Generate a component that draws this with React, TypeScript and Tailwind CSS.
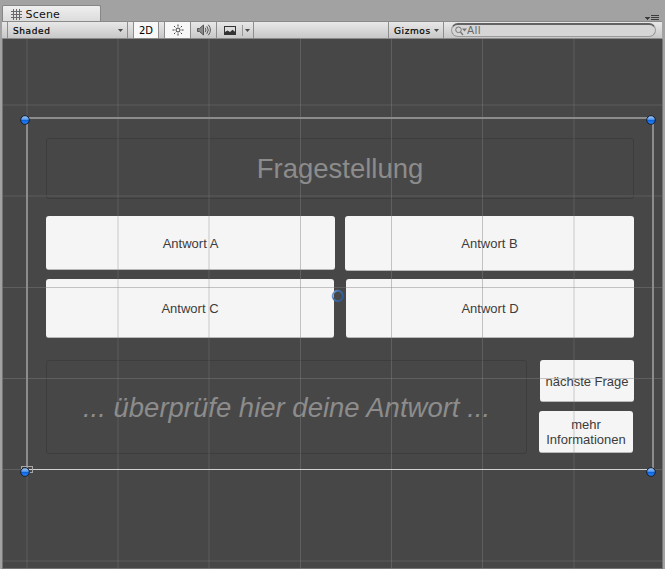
import React from "react";

const VERTICAL = [
  { at: 26, size: 2 },
  { at: 117, size: 2 },
  { at: 208, size: 2 },
  { at: 300, size: 1 },
  { at: 391, size: 1 },
  { at: 482, size: 1 },
  { at: 573, size: 2 },
];

const HORIZONTAL = [
  { at: 65, size: 2 },
  { at: 156, size: 2 },
  { at: 248, size: 1 },
  { at: 339, size: 1 },
  { at: 430, size: 1 },
  { at: 521, size: 2 },
];

function GridLines() {
  return (
    <svg className="pointer-events-none absolute left-0 top-0" width="665" height="530" shapeRendering="crispEdges">
      {VERTICAL.map((l) => (
        <rect key={l.at} x={l.at} y={0} width={l.size} height={530} fill="#808080" fillOpacity={l.size === 2 ? 0.19 : 0.43} />
      ))}
      {HORIZONTAL.map((l) => (
        <rect key={l.at} x={3} y={l.at} width={659} height={l.size} fill="#808080" fillOpacity={l.size === 2 ? 0.19 : 0.43} />
      ))}
    </svg>
  );
}

function CanvasOutline() {
  return (
    <svg className="pointer-events-none absolute left-0 top-0" width="665" height="530">
      <defs>
        <linearGradient id="knob" x1="0" y1="0" x2="0" y2="1">
          <stop offset="0" stopColor="#a9cdf8" />
          <stop offset="0.42" stopColor="#5a9df0" />
          <stop offset="0.55" stopColor="#0c63e0" />
          <stop offset="1" stopColor="#2f8cff" />
        </linearGradient>
        <linearGradient id="pivot" x1="0" y1="0" x2="1" y2="0.5">
          <stop offset="0" stopColor="#8fb4e2" />
          <stop offset="0.4" stopColor="#4470ad" />
          <stop offset="1" stopColor="#2f5b9c" />
        </linearGradient>
      </defs>
      <g fill="#8c8c8c" shapeRendering="crispEdges">
        <rect x="26" y="78" width="628" height="2" />
        <rect x="26" y="78" width="2" height="353" />
        <rect x="652" y="78" width="2" height="353" />
        <rect x="26" y="430" width="628" height="1" fill="#d2d2d2" />
      </g>
      <rect x="21.5" y="427.5" width="11" height="6" fill="none" stroke="#a8a8a8" />
      {[25, 651].map((x) =>
        [81, 433].map((y) => (
          <circle key={`${x}-${y}`} cx={x} cy={y} r="4.3" fill="url(#knob)" stroke="#161d2a" strokeWidth="1" />
        )),
      )}
      <circle cx="337.8" cy="257" r="5.2" fill="none" stroke="url(#pivot)" strokeWidth="1.9" />
    </svg>
  );
}

function SceneButton({ className, children }: { className: string; children: React.ReactNode }) {
  return (
    <button
      className={`flex items-center justify-center rounded-[3px] border-b border-[#b9b9b9] bg-[#f5f5f5] text-[13px] leading-[14.5px] text-[#3c3c3c] ${className}`}
    >
      {children}
    </button>
  );
}

function Arrow({ className = "" }: { className?: string }) {
  return (
    <svg className={className} width="5" height="3" viewBox="0 0 5 3">
      <path d="M0 0h5L2.5 3z" fill="#4a4a4a" />
    </svg>
  );
}

function TabBar() {
  return (
    <div className="flex h-[21px] items-end justify-between pl-[2px]">
      <div className="flex h-4 w-[99px] items-center rounded-t-[2px] border border-b-0 border-[#868686] bg-linear-to-b from-[#efefef] to-[#dcdcdc] pl-2">
        <svg width="11" height="11" viewBox="0 0 11 11" className="mt-px" shapeRendering="crispEdges">
          <path d="M2.5 0v11M5.5 0v11M8.5 0v11M0 2.5h11M0 5.5h11M0 8.5h11" stroke="#6a6a6a" strokeWidth="1" />
        </svg>
        <span className="ml-[3.5px] mt-px text-[11px] leading-none tracking-[0.2px] text-[#111]">Scene</span>
      </div>
      <svg width="14" height="6" viewBox="0 0 14 6" className="mr-[6px]" shapeRendering="crispEdges">
        <path d="M0 2h5v1H4v1H3v1H2V4H1V3H0zM6 0h8v1H6zM6 2h8v1H6zM6 4h8v1H6z" fill="#3c3c3c" />
      </svg>
    </div>
  );
}

function Toolbar() {
  return (
    <div className="mx-[2px] flex h-[18px] w-[660px] border-y border-[#8a8a8a] bg-linear-to-b from-[#e8e8e8] to-[#c8c8c8] text-[9px] text-black">
      <div className="w-[6px] border-r border-[#8e8e8e]" />
      <div className="flex w-[120px] items-center justify-between border-r border-[#8e8e8e] pl-[5px] pr-[4px]">
        <span className="pt-[2px] leading-none tracking-[0.6px] [-webkit-text-stroke:0.2px_black]">Shaded</span>
        <Arrow />
      </div>
      <div className="w-[6px] border-r border-[#8e8e8e]" />
      <div className="flex w-[25px] items-center justify-center border-r border-[#8e8e8e] bg-[#f8f8f8]">
        <span className="pt-px text-[10px] leading-none">2D</span>
      </div>
      <div className="w-[6px] border-r border-[#8e8e8e]" />
      <div className="flex w-[26px] items-center justify-center border-r border-[#8e8e8e] bg-[#f8f8f8]">
        <svg width="12" height="12" viewBox="0 0 12 12" fill="none" stroke="#3c3c3c">
          <circle cx="6" cy="6" r="2" />
          <path d="M6 .5v2M6 9.5v2M.5 6h2M9.5 6h2M2 2l1.3 1.3M8.7 8.7L10 10M2 10l1.3-1.3M8.7 3.3L10 2" />
        </svg>
      </div>
      <div className="flex w-[26px] items-center justify-center border-r border-[#8e8e8e]">
        <svg width="14" height="12" viewBox="0 0 14 12" fill="none" stroke="#555">
          <path d="M.5 4.5h2L6.5 1v10l-4-3.5h-2z" fill="#8a8a8a" />
          <path d="M8.2 3.8q1.6 2.2 0 4.4M9.8 2.2q3 3.8 0 7.6M11.4.8q4 5.2 0 10.4" />
        </svg>
      </div>
      <div className="flex w-[37px] items-center border-r border-[#8e8e8e] pl-[7px]">
        <svg width="12" height="9" viewBox="0 0 12 9">
          <path d="M0 0h12v9H0z" fill="#333" />
          <path d="M1 1h10v4.8L8.5 3.8 6 6 3.5 4.6 1 6z" fill="#ddd" />
        </svg>
        <div className="ml-[6px] h-[11px] w-px bg-[#999]" />
        <Arrow className="ml-[2px]" />
      </div>
      <div className="grow" />
      <div className="flex w-[56px] items-center justify-between border-x border-[#8e8e8e] pl-[5px] pr-[4px]">
        <span className="pt-[2px] leading-none tracking-[0.6px] [-webkit-text-stroke:0.2px_black]">Gizmos</span>
        <Arrow />
      </div>
      <div className="flex w-[218px] items-center pl-[7px] pr-[6px]">
        <div className="flex h-[14px] w-full items-center rounded-full border border-t-2 border-[#999] border-t-[#626262] bg-[#d6d6d6] pl-[3px]">
          <svg width="12" height="10" viewBox="0 0 12 10" fill="none" stroke="#777">
            <circle cx="3.5" cy="3.8" r="2.8" />
            <path d="M5.5 6L8 9" strokeWidth="1.3" />
            <path d="M7 2.5h5L9.5 5.5z" fill="#777" stroke="none" />
          </svg>
          <span className="-mt-px text-[10.5px] leading-none tracking-[0.3px] text-[#686868]">All</span>
        </div>
      </div>
    </div>
  );
}

export default function App() {
  return (
    <div className="h-[569px] w-[665px] overflow-hidden bg-[#a2a2a2] font-['DejaVu_Sans',sans-serif]">
      <TabBar />
      <Toolbar />
      <main className="relative ml-[2px] h-[530px] w-[661px] border-x border-b border-[#747474] bg-[#474747] font-['Liberation_Sans',Arial,sans-serif]">
        <div className="flex flex-col pl-[43px] pt-[99px]">
          <div className="flex h-[61px] w-[588px] items-center justify-center rounded-[3px] border border-[#3d3d3d] pt-px text-[27.5px] text-[#8c8c8c]">
            Fragestellung
          </div>
          <div className="mt-[17px] flex items-start gap-[10px]">
            <SceneButton className="h-[54px] w-[289px] pt-[3px]">Antwort A</SceneButton>
            <SceneButton className="h-[55px] w-[289px] pt-[2px]">Antwort B</SceneButton>
          </div>
          <div className="mt-[8px] flex gap-[12px]">
            <SceneButton className="h-[59px] w-[288px] pt-[2px]">Antwort C</SceneButton>
            <SceneButton className="h-[59px] w-[288px] pt-[2px]">Antwort D</SceneButton>
          </div>
          <div className="mt-[22px] flex">
            <div className="flex h-[94px] w-[481px] items-center justify-center whitespace-nowrap rounded-[3px] border border-[#3d3d3d] pt-[2px] text-[27.5px] italic text-[#8c8c8c]">
              ... überprüfe hier deine Antwort ...
            </div>
            <div className="ml-[12px] flex flex-col gap-[9px]">
              <SceneButton className="ml-px h-[42px] w-[94px] whitespace-nowrap pt-[3px]">nächste Frage</SceneButton>
              <SceneButton className="h-[42px] w-[94px] pt-[2px]">
                <span>
                  mehr
                  <br />
                  Informationen
                </span>
              </SceneButton>
            </div>
          </div>
        </div>
        <div className="absolute -left-[3px] top-0">
          <GridLines />
          <CanvasOutline />
        </div>
      </main>
    </div>
  );
}
